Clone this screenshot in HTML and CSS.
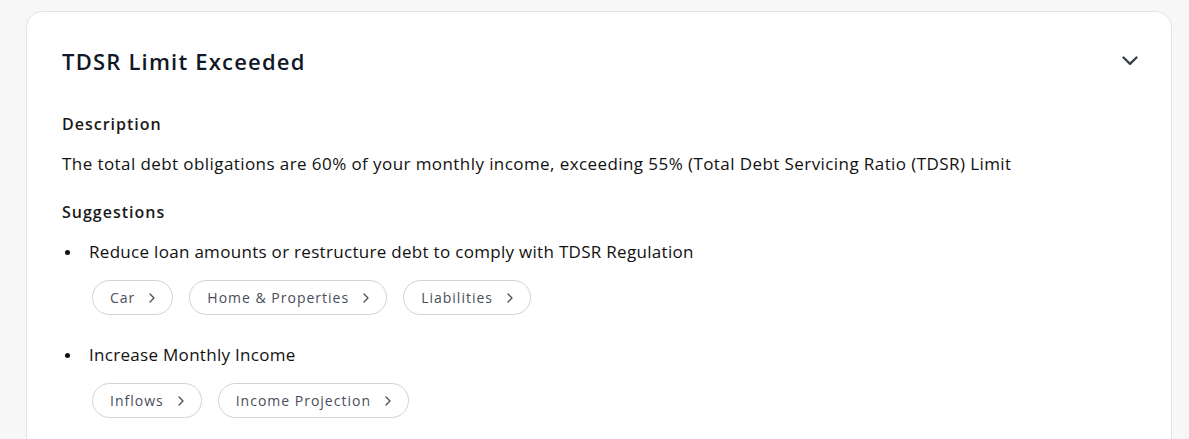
FILE: index.html
```html
<!DOCTYPE html>
<html lang="en">

<head>
    <meta charset="UTF-8">
    <meta name="viewport" content="width=device-width, initial-scale=1.0">
    <title>TDSR Limit Exceeded</title>
    <link rel="stylesheet" href="styles.css">
</head>

<body>
    <!-- Alert card -->
    <section class="card">
        <div class="card-header">
            <h2 class="card-title">TDSR Limit Exceeded</h2>
            <button class="toggle" aria-label="Collapse">
                <svg width="16" height="10" viewBox="0 0 16 10" fill="none">
                    <path d="M1.5 1.5 L8 7.8 L14.5 1.5" stroke="#3b3f4c" stroke-width="2.4" stroke-linecap="round" stroke-linejoin="round" />
                </svg>
            </button>
        </div>

        <h3 class="section-title">Description</h3>
        <p class="description">The total debt obligations are 60% of your monthly income, exceeding 55% (Total Debt Servicing Ratio (TDSR) Limit</p>

        <h3 class="section-title suggestions-title">Suggestions</h3>
        <ul class="suggestions">
            <li>
                <span class="suggestion-text">Reduce loan amounts or restructure debt to comply with TDSR Regulation</span>
                <div class="chips">
                    <a class="chip" href="#car">Car
                        <svg class="chip-arrow" width="6" height="10" viewBox="0 0 6 10"><path d="M1 1 L5 5 L1 9" /></svg>
                    </a>
                    <a class="chip" href="#home">Home &amp; Properties
                        <svg class="chip-arrow" width="6" height="10" viewBox="0 0 6 10"><path d="M1 1 L5 5 L1 9" /></svg>
                    </a>
                    <a class="chip" href="#liabilities">Liabilities
                        <svg class="chip-arrow" width="6" height="10" viewBox="0 0 6 10"><path d="M1 1 L5 5 L1 9" /></svg>
                    </a>
                </div>
            </li>
            <li>
                <span class="suggestion-text">Increase Monthly Income</span>
                <div class="chips">
                    <a class="chip" href="#inflows">Inflows
                        <svg class="chip-arrow" width="6" height="10" viewBox="0 0 6 10"><path d="M1 1 L5 5 L1 9" /></svg>
                    </a>
                    <a class="chip" href="#income">Income Projection
                        <svg class="chip-arrow" width="6" height="10" viewBox="0 0 6 10"><path d="M1 1 L5 5 L1 9" /></svg>
                    </a>
                </div>
            </li>
        </ul>
    </section>
</body>

</html>
```

FILE: styles.css
```css
body {
    margin: 0;
    padding: 11px 17px 0 26px;
    background-color: #f7f7f7;
    font-family: "Open Sans", Arial, sans-serif;
    color: #111111;
}

.card {
    background-color: #fff;
    border: 1px solid #e3e3e3;
    border-radius: 16px;
    padding: 34px 35px 40px;
    min-height: 460px;
}

.card-header {
    display: flex;
    align-items: center;
    justify-content: space-between;
}

.card-title {
    margin: 0;
    font-size: 22px;
    line-height: 30px;
    font-weight: 600;
    color: #111827;
    letter-spacing: 1.2px;
}

.toggle {
    background: none;
    border: none;
    padding: 0;
    margin-right: -2px;
    display: flex;
    cursor: pointer;
}

.section-title {
    margin: 36px 0 0;
    font-size: 16px;
    line-height: 24px;
    font-weight: 600;
    color: #1a1a1a;
    letter-spacing: 1px;
}

.suggestions-title {
    margin-top: 24px;
}

.description {
    margin: 16px 0 0;
    font-size: 17px;
    line-height: 24px;
    letter-spacing: 0.42px;
}

.suggestions {
    margin: 16px 0 0;
    padding: 0;
    list-style: none;
}

.suggestions li {
    margin-bottom: 28px;
}

.suggestion-text {
    display: block;
    font-size: 17px;
    line-height: 24px;
    padding-left: 27px;
    position: relative;
    letter-spacing: 0.3px;
}

/* bullet dot */
.suggestion-text::before {
    content: "";
    position: absolute;
    left: 3px;
    top: 10px;
    width: 5px;
    height: 5px;
    border-radius: 50%;
    background-color: #111;
}

.chips {
    display: flex;
    gap: 16px;
    margin-top: 16px;
    padding-left: 30px;
}

.chip {
    display: inline-flex;
    align-items: center;
    gap: 14px;
    height: 33px;
    padding: 0 17px;
    border: 1px solid #d2d2d2;
    border-radius: 18px;
    font-size: 14px;
    color: #4a4e5a;
    text-decoration: none;
    letter-spacing: 1px;
}

.chip-arrow {
    fill: none;
    stroke: #4a4e5a;
    stroke-width: 1.3;
    stroke-linecap: round;
    stroke-linejoin: round;
}
```
